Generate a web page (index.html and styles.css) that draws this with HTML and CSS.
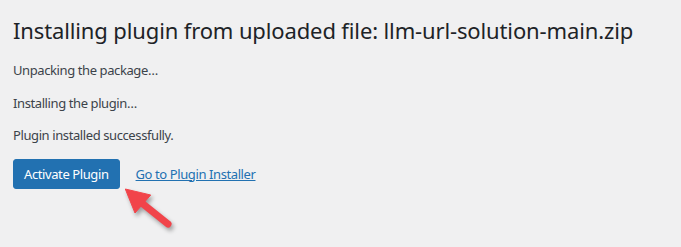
FILE: index.html
```html
<!DOCTYPE html>
<html>
<head>
<meta charset="utf-8">
<link rel="stylesheet" href="styles.css">
</head>
<body>
<div class="wrap">
  <h1 class="title">Installing plugin from uploaded file: llm-url-solution-main.zip</h1>
  <p class="msg">Unpacking the package…</p>
  <p class="msg">Installing the plugin…</p>
  <p class="msg">Plugin installed successfully.</p>
  <div class="actions">
    <a class="button-primary" href="#">Activate Plugin</a>
    <a class="link" href="#">Go to Plugin Installer</a>
  </div>
  <svg class="arrow" width="80" height="60" viewBox="0 0 80 60">
    <g fill="#f1444a" stroke="#f1444a">
      <line x1="33" y1="24" x2="58" y2="44" stroke-width="7" stroke-linecap="round"/>
      <polygon points="15.3,9 40.7,15 25,33" stroke-width="1" stroke-linejoin="round"/>
    </g>
  </svg>
</div>
</body>
</html>
```
FILE: styles.css
```css
html, body {
  margin: 0;
  padding: 0;
  background: #f0f0f1;
}
body {
  font-family: "Noto Sans", "Open Sans", sans-serif;
  color: #3c434a;
  width: 681px;
  height: 247px;
  overflow: hidden;
}
.wrap {
  position: relative;
  padding: 15px 0 0 13px;
}
.title {
  margin: 0;
  font-size: 22px;
  letter-spacing: -0.13px;
  font-weight: 400;
  line-height: 30px;
  color: #1d2327;
  white-space: nowrap;
}
.msg {
  font-size: 13px;
  letter-spacing: -0.4px;
  line-height: 19.5px;
  margin: 13px 0;
}
.title + .msg {
  margin-top: 16px;
}
.actions {
  display: flex;
  align-items: center;
  gap: 16px;
}
.button-primary {
  display: inline-block;
  box-sizing: border-box;
  height: 30px;
  line-height: 28px;
  padding: 0 10px;
  font-size: 13px;
  letter-spacing: -0.4px;
  background: #2271b1;
  border: 1px solid #2271b1;
  border-radius: 3px;
  color: #fff;
  text-decoration: none;
}
.link {
  font-size: 13px;
  letter-spacing: -0.4px;
  color: #2271b1;
  text-decoration: underline;
}
.arrow {
  position: absolute;
  left: 110px;
  top: 180px;
  filter: drop-shadow(2px 3px 2px rgba(0,0,0,0.35));
}
```
